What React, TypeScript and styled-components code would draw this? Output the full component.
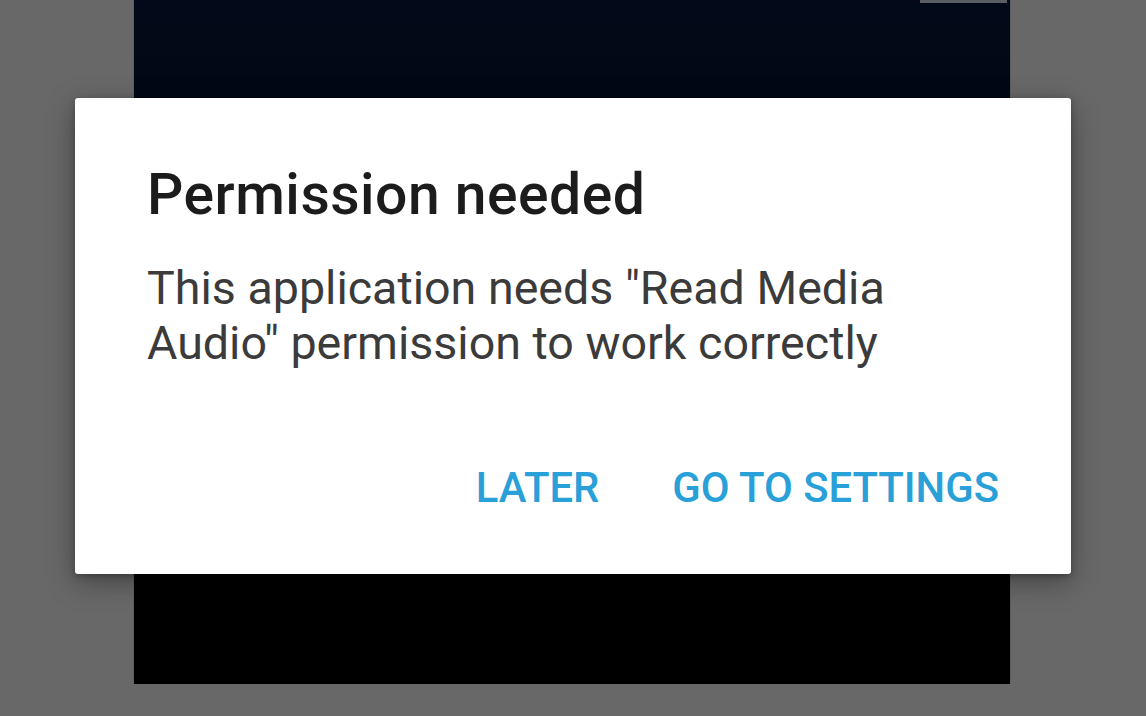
import React from "react";
import styled, { createGlobalStyle } from "styled-components";

const Global = createGlobalStyle`
  html, body { margin: 0; padding: 0; background: #686868; }
  body { font-family: Roboto, "Noto Sans", Arial, sans-serif; -webkit-font-smoothing: antialiased; }
  #root { width: 1146px; height: 716px; overflow: hidden; }
`;

const Stage = styled.div`
  position: relative;
  width: 1146px;
  height: 716px;
  background: #686868;
  display: flex;
  align-items: flex-start;
  padding-left: 134px;
  box-sizing: border-box;
`;

const PhoneScreen = styled.div`
  width: 876px;
  height: 684px;
  background: linear-gradient(180deg, #020a19 0%, #010610 30%, #000000 72%, #000000 100%);
  box-shadow: 1px 0 0 #5e5e5e, -1px 0 0 #5e5e5e;
  display: flex;
  justify-content: flex-end;
  padding-right: 3px;
  box-sizing: border-box;
`;

const StatusChip = styled.div`
  width: 87px;
  height: 3px;
  background: #5b5e64;
`;

const Dialog = styled.div`
  position: absolute;
  top: 98px;
  left: 75px;
  width: 996px;
  height: 476px;
  box-sizing: border-box;
  background: #ffffff;
  border-radius: 3px;
  box-shadow: 0 8px 28px rgba(0, 0, 0, 0.35), 0 2px 6px rgba(0, 0, 0, 0.25);
  padding: 65px 72px 0 72px;
  display: flex;
  flex-direction: column;
`;

const Title = styled.h2`
  margin: 0;
  font-family: Roboto, Arial, sans-serif;
  font-weight: 500;
  font-size: 57px;
  line-height: 64px;
  color: #1c1c1c;
  letter-spacing: 0.5px;
`;

const Message = styled.p`
  margin: 34px 0 0 0;
  font-family: Roboto, Arial, sans-serif;
  font-weight: 400;
  font-size: 46.6px;
  line-height: 55px;
  color: #3b3b3b;
  width: 770px;
`;

const Actions = styled.div`
  margin-top: 93px;
  display: flex;
  justify-content: flex-end;
  gap: 73px;
`;

const ActionButton = styled.button`
  border: none;
  background: none;
  padding: 0;
  margin: 0;
  font-family: Roboto, Arial, sans-serif;
  font-weight: 500;
  font-size: 41.8px;
  line-height: 48px;
  color: #2aa0d8;
  text-transform: uppercase;
  cursor: pointer;
`;

export default function App() {
  return (
    <>
      <Global />
      <Stage>
        <PhoneScreen>
          <StatusChip />
        </PhoneScreen>
        <Dialog>
          <Title>Permission needed</Title>
          <Message>
            This application needs "Read Media Audio" permission to work correctly
          </Message>
          <Actions>
            <ActionButton>Later</ActionButton>
            <ActionButton>Go to settings</ActionButton>
          </Actions>
        </Dialog>
      </Stage>
    </>
  );
}
